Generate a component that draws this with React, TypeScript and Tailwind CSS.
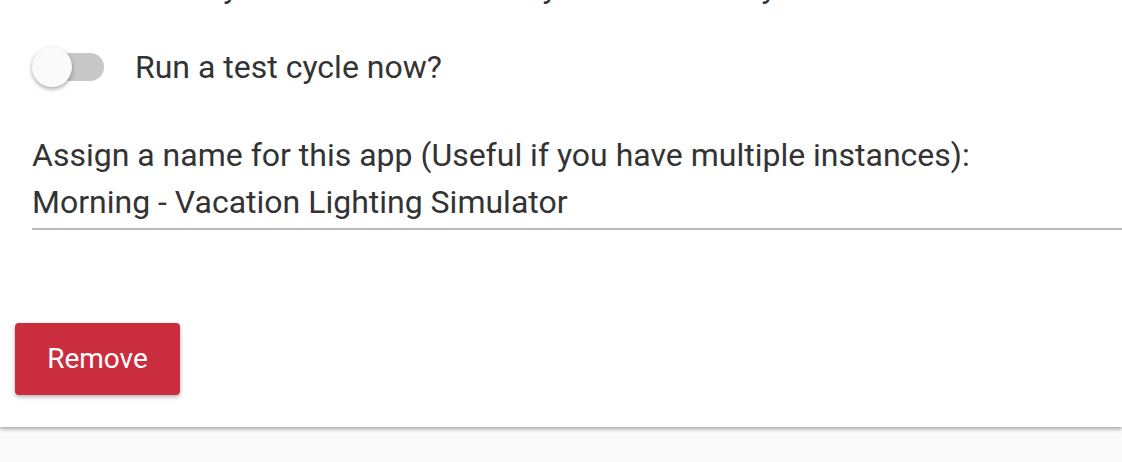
import { useState } from 'react';

export default function App() {
  const [testCycle, setTestCycle] = useState(false);
  const [appName, setAppName] = useState('Morning - Vacation Lighting Simulator');

  return (
    <div className="h-[462px] overflow-hidden bg-[#fafafa] text-[#333333]" style={{ fontFamily: 'Roboto, "Noto Sans", sans-serif' }}>
      <div className="relative z-10 flex h-[427px] flex-col overflow-hidden bg-white shadow-[0_2px_4px_rgba(0,0,0,0.35)]">
        <div className="px-8">
          {/* tail of the previous setting's description, scrolled off the top */}
          <p className="-mt-[31px] whitespace-nowrap text-[32px] leading-[36px]">
            Switch on only if the mode is in Away or on a Sunday at the times set below
          </p>

          <div className="mt-[42px] flex h-[40px] items-center">
            <button
              type="button"
              onClick={() => setTestCycle(!testCycle)}
              className="relative flex h-[40px] w-[72px] items-center"
            >
              <span className="ml-[6px] h-[28px] w-[66px] rounded-full bg-[#c8c8c8]" />
              <span
                className={
                  testCycle
                    ? 'absolute left-[32px] top-0 h-[40px] w-[40px] rounded-full bg-[#fafafa] shadow-[0_2px_4px_rgba(0,0,0,0.35)]'
                    : 'absolute left-0 top-0 h-[40px] w-[40px] rounded-full bg-[#fafafa] shadow-[0_2px_4px_rgba(0,0,0,0.35)]'
                }
              />
            </button>
            <span className="ml-[31px] text-[32px] leading-[36px]">Run a test cycle now?</span>
          </div>

          <label className="mt-[50px] block whitespace-nowrap text-[32px] leading-[36px]">
            Assign a name for this app (Useful if you have multiple instances):
          </label>
          <div className="-mr-8 mt-[11px] border-b-2 border-[#bababa] pb-[8px]">
            <input
              value={appName}
              onChange={(e) => setAppName(e.target.value)}
              className="block h-[36px] w-full bg-transparent text-[32px] leading-[36px] text-[#333333] outline-none"
            />
          </div>
        </div>

        <div className="mt-[93px] px-[15px]">
          <button
            type="button"
            className="h-[72px] w-[165px] rounded-[4px] bg-[#ca2e3e] text-[28px] text-white shadow-[0_2px_4px_rgba(0,0,0,0.3)]"
          >
            Remove
          </button>
        </div>
      </div>
    </div>
  );
}
